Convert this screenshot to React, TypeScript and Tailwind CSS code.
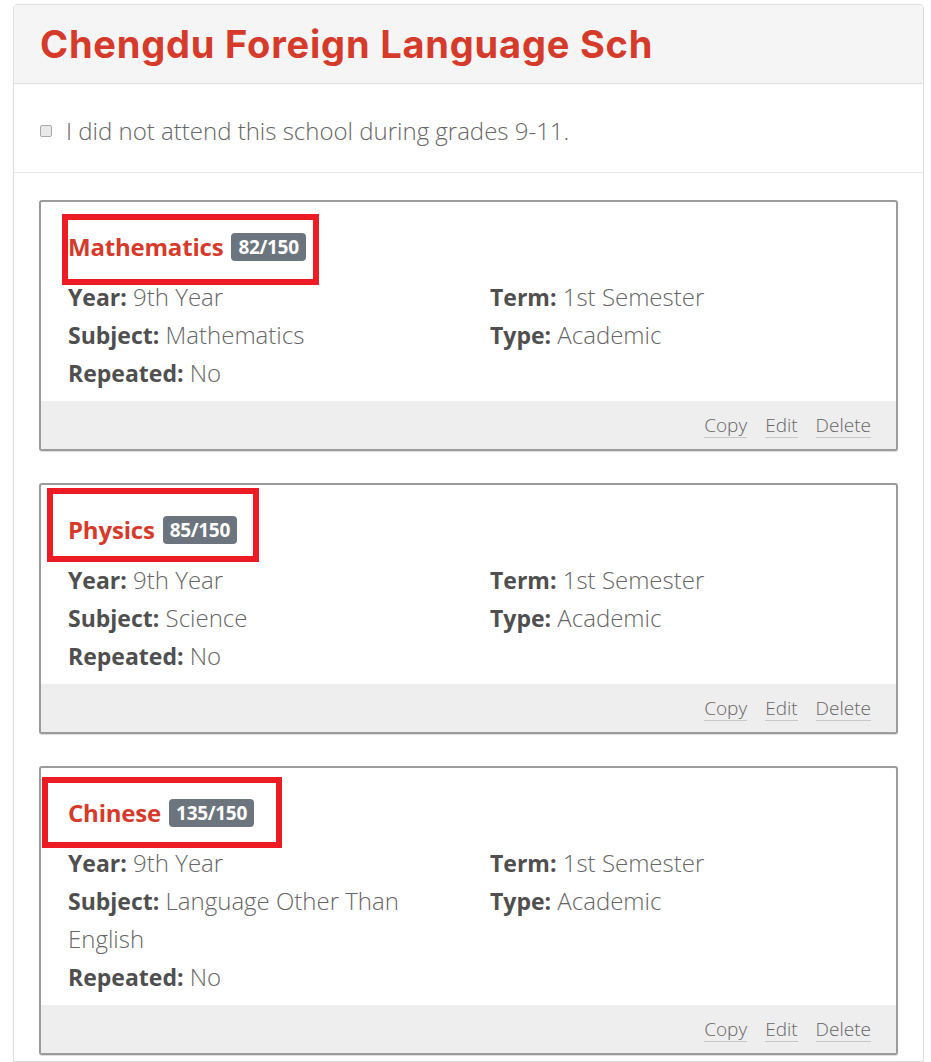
type Course = {
  name: string
  score: string
  year: string
  term: string
  subject: string
  type: string
  repeated: string
  mark: string
}

const courses: Course[] = [
  {
    name: 'Mathematics',
    score: '82/150',
    year: '9th Year',
    term: '1st Semester',
    subject: 'Mathematics',
    type: 'Academic',
    repeated: 'No',
    mark: 'left-[21px] top-[12px] w-[257px] h-[71px]',
  },
  {
    name: 'Physics',
    score: '85/150',
    year: '9th Year',
    term: '1st Semester',
    subject: 'Science',
    type: 'Academic',
    repeated: 'No',
    mark: 'left-[6px] top-[3px] w-[212px] h-[74px]',
  },
  {
    name: 'Chinese',
    score: '135/150',
    year: '9th Year',
    term: '1st Semester',
    subject: 'Language Other Than English',
    type: 'Academic',
    repeated: 'No',
    mark: 'left-[1px] top-[9px] w-[240px] h-[71px]',
  },
]

function Field({ label, value }: { label: string; value: string }) {
  return (
    <div>
      <span className="font-bold text-[23px] text-[#4f4f4f]">{label}:</span>{' '}
      <span className="font-light text-[#666666]">{value}</span>
    </div>
  )
}

function CourseCard({ c }: { c: Course }) {
  return (
    <div className="relative border-2 border-[#9b9b9b] rounded-[3px] bg-white shadow-[0_1px_1px_rgba(0,0,0,0.15)]">
      {/* highlight annotation */}
      <div className={`absolute border-[6px] border-[#ed1c24] pointer-events-none ${c.mark}`} />
      <div className="pl-[27px] pr-[20px] pt-[19px] pb-[9px]">
        <div className="h-[52px] flex items-center gap-[8px]">
          <span className="text-[24px] font-bold text-[#d63a2a] tracking-[-0.2px]">{c.name}</span>
          <span className="h-[28px] px-[7px] flex items-center rounded-[4px] bg-[#6c757d] text-white text-[19px] font-bold tracking-[-0.3px]">
            {c.score}
          </span>
        </div>
        <div className="mt-[5px] grid grid-cols-[400px_1fr] gap-x-[22px] text-[24px] leading-[38px]">
          <div>
            <Field label="Year" value={c.year} />
            <Field label="Subject" value={c.subject} />
            <Field label="Repeated" value={c.repeated} />
          </div>
          <div>
            <Field label="Term" value={c.term} />
            <Field label="Type" value={c.type} />
          </div>
        </div>
      </div>
      <div className="h-[48px] bg-[#eeeeee] flex items-center justify-end gap-[18px] pr-[25px] text-[19px] font-light text-[#666666]">
        <span className="border-b border-[#c8c8c8] leading-[24px]">Copy</span>
        <span className="border-b border-[#c8c8c8] leading-[24px]">Edit</span>
        <span className="border-b border-[#c8c8c8] leading-[24px]">Delete</span>
      </div>
    </div>
  )
}

export default function App() {
  return (
    <div className="min-h-[1062px] bg-white pt-[4px] pl-[13px] font-['Open_Sans',sans-serif]">
      <div className="w-[911px] border border-[#dddddd] rounded-t-[4px]">
        <div className="h-[79px] bg-[#f5f5f5] border-b border-[#dddddd] flex items-center pl-[26px]">
          <h1 className="font-['Inter',sans-serif] text-[38px] font-bold text-[#d63a2a] tracking-[0.8px]">
            Chengdu Foreign Language Sch
          </h1>
        </div>
        <div className="h-[89px] border-b border-[#e6e6e6] flex items-center pl-[26px] pt-[5px]">
          <label className="flex items-center gap-[14px] text-[24px] font-light text-[#666666]">
            <span className="w-[12px] h-[12px] rounded-[2px] border border-[#a8a8a8] bg-[#e9e9e9]" />
            I did not attend this school during grades 9-11.
          </label>
        </div>
        <div className="px-[25px] pt-[27px] pb-[6px] flex flex-col gap-[32px]">
          {courses.map((c) => (
            <CourseCard key={c.name} c={c} />
          ))}
        </div>
      </div>
    </div>
  )
}
